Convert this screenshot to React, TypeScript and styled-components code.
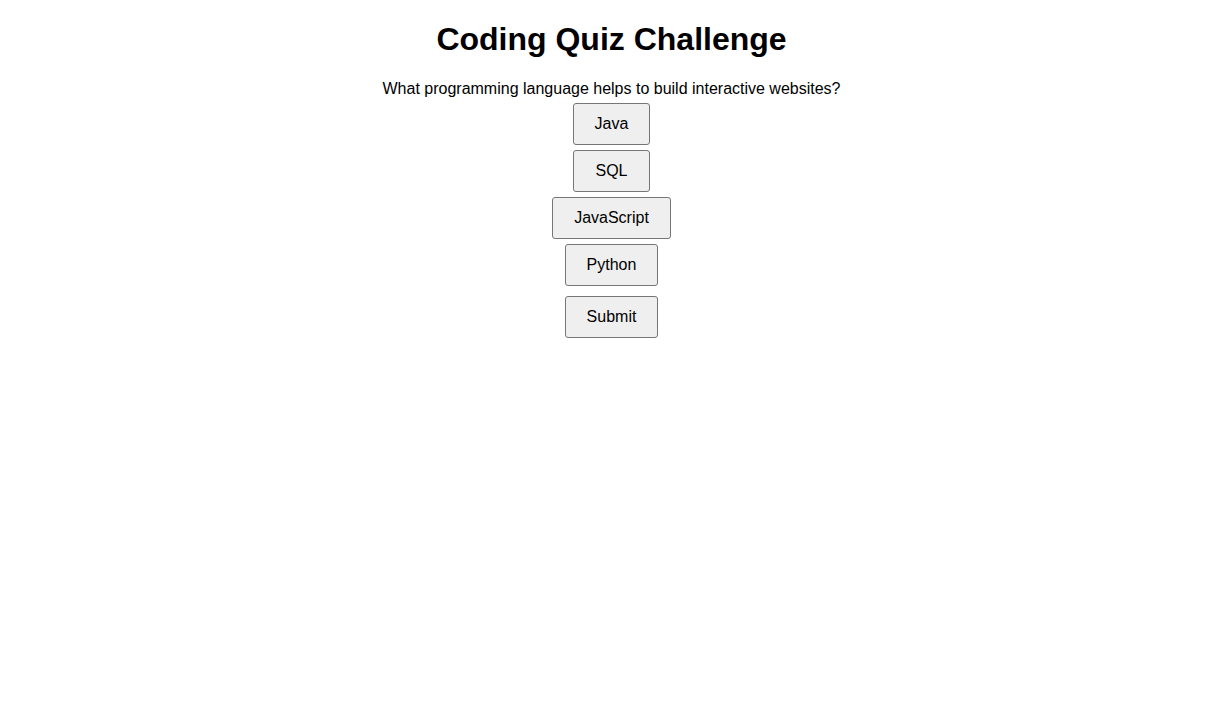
import styled, { createGlobalStyle } from 'styled-components';

const GlobalStyle = createGlobalStyle`
  body {
    margin: 0;
    background: #ffffff;
    font-family: 'Liberation Sans', Arial, sans-serif;
    color: #000000;
  }
`;

const Page = styled.main`
  display: flex;
  flex-direction: column;
  align-items: center;
  padding-top: 21.44px;
  text-align: center;
`;

const Title = styled.h1`
  margin: 0 0 21.44px 0;
  font-size: 32px;
  font-weight: 700;
  line-height: normal;
`;

const Question = styled.div`
  font-size: 16px;
  line-height: normal;
`;

const Options = styled.div`
  display: flex;
  flex-direction: column;
  align-items: center;
  gap: 5px;
  margin-top: 5px;
`;

type QuizButtonProps = {
  $submit?: boolean;
};

const QuizButton = styled.button<QuizButtonProps>`
  appearance: none;
  font-family: 'Liberation Sans', Arial, sans-serif;
  font-size: 16px;
  line-height: normal;
  color: #000000;
  background: #efefef;
  border: 1px solid #767676;
  border-radius: 3px;
  padding: 11px 21px;
  margin-top: ${(props) => (props.$submit ? '10px' : '0')};
  cursor: pointer;
  &:hover {
    background: #e5e5e5;
  }
`;

const answers = ['Java', 'SQL', 'JavaScript', 'Python'];

export default function App() {
  return (
    <>
      <GlobalStyle />
      <Page>
        <Title>Coding Quiz Challenge</Title>
        <Question>What programming language helps to build interactive websites?</Question>
        <Options>
          {answers.map((a) => (
            <QuizButton key={a}>{a}</QuizButton>
          ))}
        </Options>
        <QuizButton $submit>Submit</QuizButton>
      </Page>
    </>
  );
}
